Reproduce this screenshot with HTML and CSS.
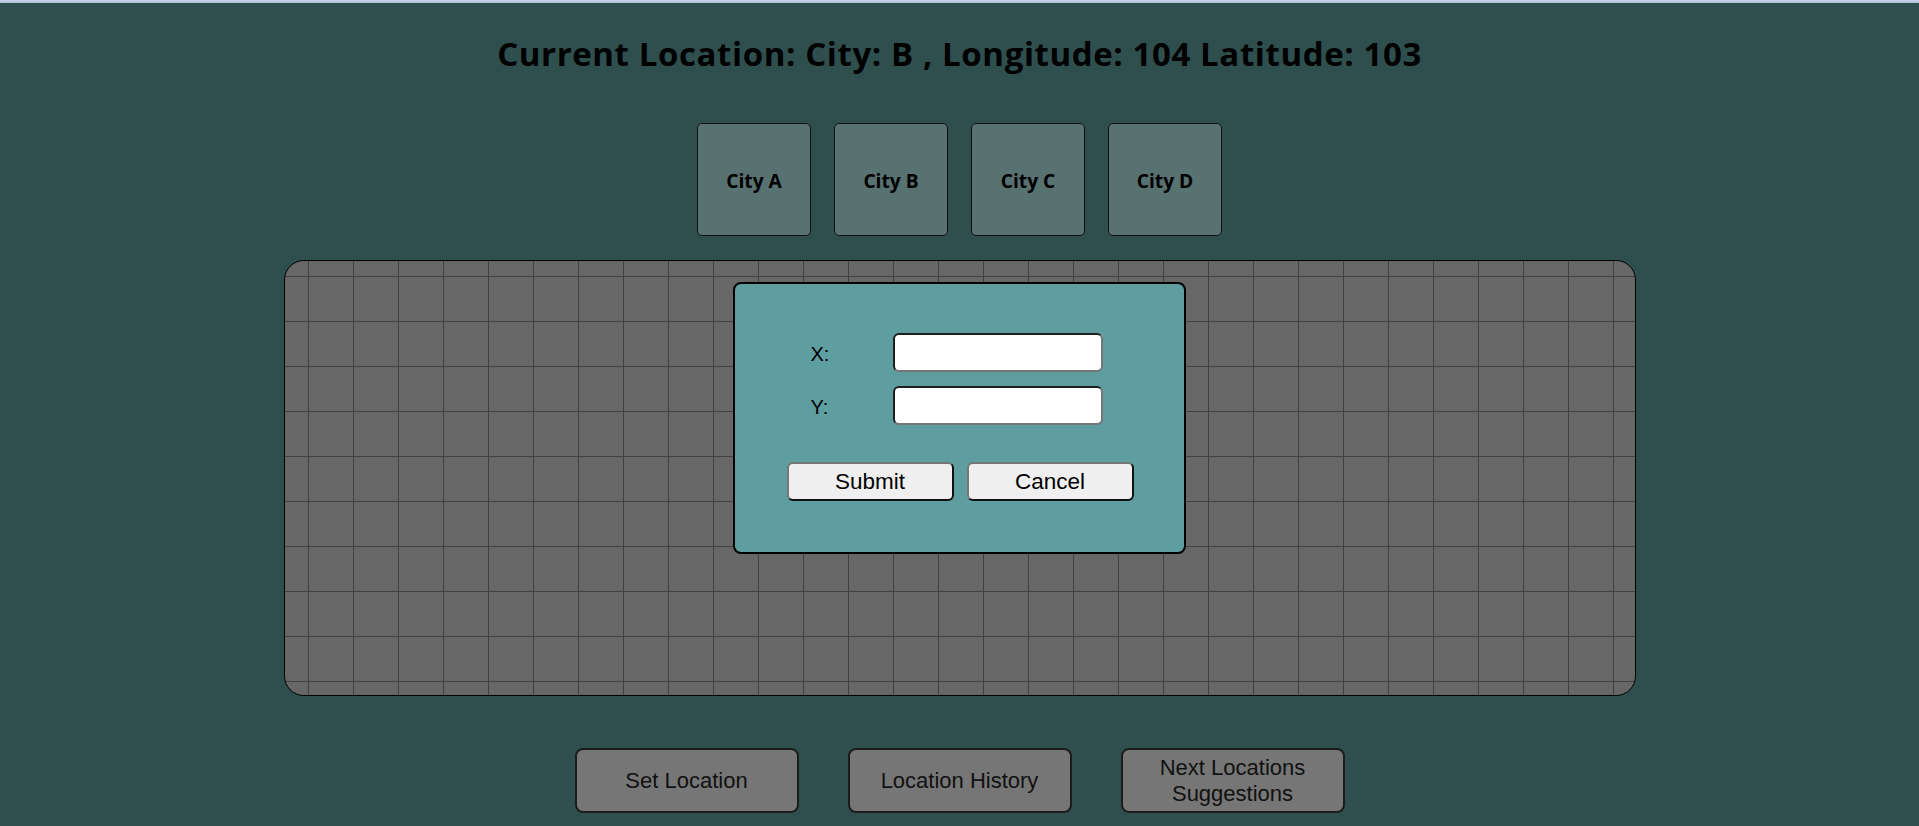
FILE: index.html
```html
<!DOCTYPE html>
<html lang="en">
<head>
<meta charset="utf-8">
<title>Location</title>
<link rel="stylesheet" href="styles.css">
</head>
<body>
<div class="topbar"></div>
<h1 class="title">Current Location: City: B , Longitude: 104 Latitude: 103</h1>
<div class="cities">
  <div class="city"><h3>City A</h3></div>
  <div class="city"><h3>City B</h3></div>
  <div class="city"><h3>City C</h3></div>
  <div class="city"><h3>City D</h3></div>
</div>
<div class="board">
  <div class="modal">
    <div class="fields">
      <label class="lbl" for="x">X:</label>
      <input class="inp" id="x" type="text">
      <label class="lbl" for="y">Y:</label>
      <input class="inp" id="y" type="text">
    </div>
    <div class="actions">
      <button class="mbtn">Submit</button>
      <button class="mbtn">Cancel</button>
    </div>
  </div>
</div>
<div class="controls">
  <button class="cbtn">Set Location</button>
  <button class="cbtn">Location History</button>
  <button class="cbtn">Next Locations Suggestions</button>
</div>
</body>
</html>
```
FILE: styles.css
```css
html, body {
  margin: 0;
  padding: 0;
}
body {
  background: #2f4f4f;
  font-family: "Open Sans", "Noto Sans", sans-serif;
  color: #000;
  height: 826px;
  overflow: hidden;
}
.topbar {
  height: 3px;
  background: linear-gradient(to bottom, #c7d3e8, #aebfdd);
}
.title {
  margin: 0;
  padding-top: 29px;
  height: 51px;
  line-height: 44px;
  font-size: 33px;
  letter-spacing: 0.6px;
  font-weight: 700;
  text-align: center;
}
.cities {
  display: flex;
  justify-content: center;
  gap: 23px;
  margin-top: 40px;
}
.city {
  box-sizing: border-box;
  width: 114px;
  height: 113px;
  border: 1px solid #111;
  border-radius: 5px;
  background: #587171;
  display: flex;
  align-items: center;
  justify-content: center;
}
.city h3 {
  margin: 0;
  padding-top: 2px;
  font-size: 19.2px;
  font-weight: 700;
}
.board {
  position: relative;
  box-sizing: border-box;
  width: 1352px;
  height: 436px;
  margin: 24px auto 0;
  border: 1px solid #000;
  border-radius: 20px;
  background-color: #676767;
  background-image:
    linear-gradient(to right, #404040 1px, transparent 1px),
    linear-gradient(to bottom, #404040 1px, transparent 1px);
  background-size: 45px 45px;
  background-position: 23px 15px;
}
.modal {
  position: absolute;
  top: 21px;
  left: 448px;
  box-sizing: border-box;
  width: 453px;
  height: 272px;
  border: 2px solid #000;
  border-radius: 8px;
  background: #5f9ea0;
  font-family: "Liberation Sans", Arial, sans-serif;
}
.fields {
  display: grid;
  grid-template-columns: 82px 210px;
  row-gap: 14px;
  margin: 49px 0 0 76px;
  align-items: center;
}
.lbl {
  font-size: 20px;
  padding-top: 4px;
}
.inp {
  box-sizing: border-box;
  width: 210px;
  height: 39px;
  margin: 0;
  border: 2px solid;
  border-color: #1e1e1e #767676 #767676 #1e1e1e;
  border-radius: 6px;
  background: #fff;
}
.actions {
  display: flex;
  gap: 13px;
  margin: 37px 0 0 52px;
}
.mbtn {
  box-sizing: border-box;
  width: 167px;
  height: 39px;
  border: 2px solid;
  border-color: #767676 #111 #111 #767676;
  border-radius: 6px;
  background: #efefef;
  font-family: "Liberation Sans", Arial, sans-serif;
  font-size: 22.5px;
  color: #000;
  padding: 0;
}
.controls {
  display: flex;
  justify-content: center;
  gap: 49px;
  margin-top: 52px;
}
.cbtn {
  box-sizing: border-box;
  width: 224px;
  height: 65px;
  border: 2px solid #1c1c1c;
  border-radius: 8px;
  background: #767676;
  font-family: "Liberation Sans", Arial, sans-serif;
  font-size: 22px;
  line-height: 1.15;
  color: #111;
  padding: 0 20px;
}
```
